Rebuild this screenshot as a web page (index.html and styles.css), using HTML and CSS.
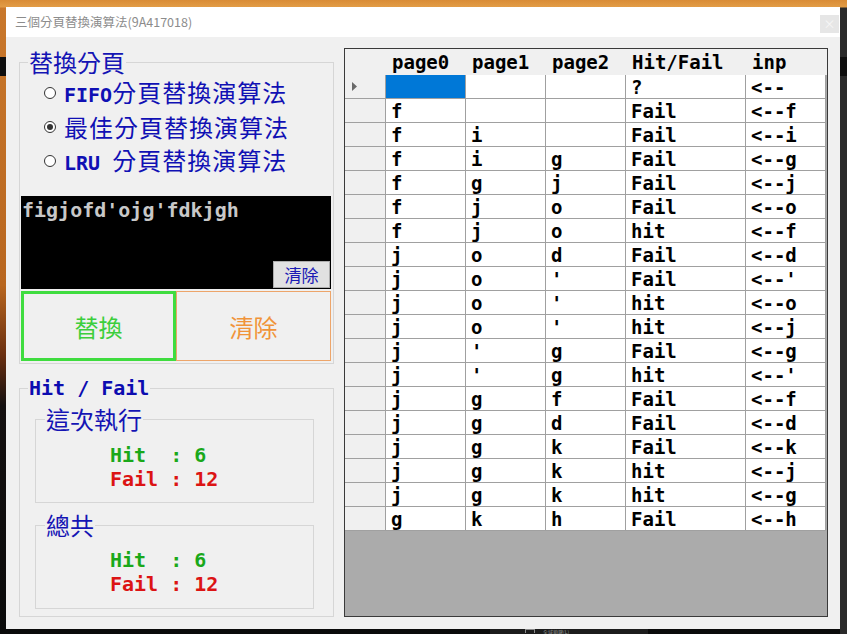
FILE: index.html
```html
<!DOCTYPE html>
<html>
<head>
<meta charset="utf-8">
<title>三個分頁替換演算法</title>
<link rel="stylesheet" href="styles.css">
</head>
<body>
<div class="desktop">
  <div class="window">
    <div class="titlebar">
      <span class="title">三個分頁替換演算法(9A417018)</span>
      <span class="close">×</span>
    </div>
    <div class="client">
      <div class="left">
        <fieldset class="group g-replace">
          <legend class="legend-cjk">替換分頁</legend>
          <div class="radios">
            <div class="radio"><span class="dot"></span><span class="rlabel"><b class="mono">FIFO</b>分頁替換演算法</span></div>
            <div class="radio"><span class="dot checked"></span><span class="rlabel">最佳分頁替換演算法</span></div>
            <div class="radio"><span class="dot"></span><span class="rlabel"><b class="mono">LRU </b>分頁替換演算法</span></div>
          </div>
          <div class="input">
            <div class="input-text">figjofd'ojg'fdkjgh</div>
            <button class="small-btn">清除</button>
          </div>
          <div class="big-btns">
            <button class="big-btn go">替換</button>
            <button class="big-btn clear">清除</button>
          </div>
        </fieldset>
        <fieldset class="group g-stats">
          <legend class="legend-mono">Hit / Fail</legend>
          <fieldset class="group sub sub1">
            <legend class="legend-cjk sub-legend">這次執行</legend>
            <div class="sub-body b1">
              <div class="stat hit">Hit  : 6</div>
              <div class="stat fail">Fail : 12</div>
            </div>
          </fieldset>
          <fieldset class="group sub sub2">
            <legend class="legend-cjk sub-legend">總共</legend>
            <div class="sub-body b2">
              <div class="stat hit">Hit  : 6</div>
              <div class="stat fail">Fail : 12</div>
            </div>
          </fieldset>
        </fieldset>
      </div>
      <div class="grid">
        <div class="hrow">
          <div class="hcell rhw"></div>
          <div class="hcell cw">page0</div>
          <div class="hcell cw">page1</div>
          <div class="hcell cw">page2</div>
          <div class="hcell ww">Hit/Fail</div>
          <div class="hcell cw">inp</div>
        </div>
        <div class="row"><div class="cell rh"><svg width="5" height="9" viewBox="0 0 5 9"><polygon points="0,0 5,4.5 0,9" fill="#6a6a6a"/></svg></div><div class="cell cw sel"></div><div class="cell cw"></div><div class="cell cw"></div><div class="cell ww">?</div><div class="cell cw">&lt;--</div></div>
        <div class="row"><div class="cell rh"></div><div class="cell cw">f</div><div class="cell cw"></div><div class="cell cw"></div><div class="cell ww">Fail</div><div class="cell cw">&lt;--f</div></div>
        <div class="row"><div class="cell rh"></div><div class="cell cw">f</div><div class="cell cw">i</div><div class="cell cw"></div><div class="cell ww">Fail</div><div class="cell cw">&lt;--i</div></div>
        <div class="row"><div class="cell rh"></div><div class="cell cw">f</div><div class="cell cw">i</div><div class="cell cw">g</div><div class="cell ww">Fail</div><div class="cell cw">&lt;--g</div></div>
        <div class="row"><div class="cell rh"></div><div class="cell cw">f</div><div class="cell cw">g</div><div class="cell cw">j</div><div class="cell ww">Fail</div><div class="cell cw">&lt;--j</div></div>
        <div class="row"><div class="cell rh"></div><div class="cell cw">f</div><div class="cell cw">j</div><div class="cell cw">o</div><div class="cell ww">Fail</div><div class="cell cw">&lt;--o</div></div>
        <div class="row"><div class="cell rh"></div><div class="cell cw">f</div><div class="cell cw">j</div><div class="cell cw">o</div><div class="cell ww">hit</div><div class="cell cw">&lt;--f</div></div>
        <div class="row"><div class="cell rh"></div><div class="cell cw">j</div><div class="cell cw">o</div><div class="cell cw">d</div><div class="cell ww">Fail</div><div class="cell cw">&lt;--d</div></div>
        <div class="row"><div class="cell rh"></div><div class="cell cw">j</div><div class="cell cw">o</div><div class="cell cw">'</div><div class="cell ww">Fail</div><div class="cell cw">&lt;--'</div></div>
        <div class="row"><div class="cell rh"></div><div class="cell cw">j</div><div class="cell cw">o</div><div class="cell cw">'</div><div class="cell ww">hit</div><div class="cell cw">&lt;--o</div></div>
        <div class="row"><div class="cell rh"></div><div class="cell cw">j</div><div class="cell cw">o</div><div class="cell cw">'</div><div class="cell ww">hit</div><div class="cell cw">&lt;--j</div></div>
        <div class="row"><div class="cell rh"></div><div class="cell cw">j</div><div class="cell cw">'</div><div class="cell cw">g</div><div class="cell ww">Fail</div><div class="cell cw">&lt;--g</div></div>
        <div class="row"><div class="cell rh"></div><div class="cell cw">j</div><div class="cell cw">'</div><div class="cell cw">g</div><div class="cell ww">hit</div><div class="cell cw">&lt;--'</div></div>
        <div class="row"><div class="cell rh"></div><div class="cell cw">j</div><div class="cell cw">g</div><div class="cell cw">f</div><div class="cell ww">Fail</div><div class="cell cw">&lt;--f</div></div>
        <div class="row"><div class="cell rh"></div><div class="cell cw">j</div><div class="cell cw">g</div><div class="cell cw">d</div><div class="cell ww">Fail</div><div class="cell cw">&lt;--d</div></div>
        <div class="row"><div class="cell rh"></div><div class="cell cw">j</div><div class="cell cw">g</div><div class="cell cw">k</div><div class="cell ww">Fail</div><div class="cell cw">&lt;--k</div></div>
        <div class="row"><div class="cell rh"></div><div class="cell cw">j</div><div class="cell cw">g</div><div class="cell cw">k</div><div class="cell ww">hit</div><div class="cell cw">&lt;--j</div></div>
        <div class="row"><div class="cell rh"></div><div class="cell cw">j</div><div class="cell cw">g</div><div class="cell cw">k</div><div class="cell ww">hit</div><div class="cell cw">&lt;--g</div></div>
        <div class="row"><div class="cell rh"></div><div class="cell cw">g</div><div class="cell cw">k</div><div class="cell cw">h</div><div class="cell ww">Fail</div><div class="cell cw">&lt;--h</div></div>
      </div>
    </div>
  </div>
  <div class="strip"><span class="strip-icon"></span><span class="strip-text">全域鎖鍵(L)</span></div>
</div>
</body>
</html>
```
FILE: styles.css
```css
* { box-sizing: border-box; }
html, body { margin: 0; padding: 0; }
body {
  width: 847px;
  height: 634px;
  overflow: hidden;
  background: #0c0c0c;
  font-family: "Noto Sans CJK TC", sans-serif;
}
.desktop {
  width: 847px;
  height: 634px;
  padding: 7px 7px 0 6px;
  background:
    linear-gradient(to bottom, #d98c36 0, #e29c46 7px, transparent 8px),
    linear-gradient(to bottom, transparent 57px, #0e0e0e 57px, #0e0e0e 76px, transparent 76px),
    linear-gradient(to right, transparent 840px, #2a2a2a 840px),
    linear-gradient(to bottom, #c9782c 0, #b8661f 45%, #6a2f10 56%, #141010 64%, #0a0a0a 100%);
}
.window {
  width: 834px;
  height: 622px;
  display: flex;
  flex-direction: column;
}
.titlebar {
  height: 30px;
  background: #ffffff;
  display: flex;
  justify-content: space-between;
  align-items: flex-start;
  padding: 0 1px 0 9px;
}
.title {
  font-size: 12.5px;
  line-height: 30px;
  color: #8c8c8c;
}
.close {
  margin-top: 8px;
  width: 19px;
  height: 18px;
  background: #e6e6e6;
  color: #f6f6f6;
  font-size: 12px;
  line-height: 18px;
  text-align: center;
}
.client {
  flex: 1;
  background: #f0f0f0;
  display: flex;
  align-items: flex-start;
  padding-left: 13px;
  gap: 10px;
}
.left {
  width: 315px;
  margin-top: 13px;
}
.group {
  margin: 0;
  padding: 0;
  min-width: 0;
  border: 1px solid #d6d6d6;
}
.legend-cjk {
  font-size: 24px;
  line-height: 24px;
  color: #1414b4;
  margin-left: 8px;
  padding: 0 1px;
}
.legend-mono {
  font-family: "DejaVu Sans Mono", monospace;
  font-weight: bold;
  font-size: 20px;
  line-height: 22px;
  color: #0c0cb0;
  margin-left: 8px;
  padding: 0 1px;
}
.g-replace { padding-bottom: 2px; }
.radios { padding-top: 2px; }
.radio {
  height: 34px;
  display: flex;
  align-items: center;
  padding-left: 24px;
}
.dot {
  width: 12px;
  height: 12px;
  border: 1px solid #333333;
  border-radius: 50%;
  background: #ffffff;
  margin-right: 8px;
  display: flex;
  align-items: center;
  justify-content: center;
  flex: none;
}
.dot.checked::after {
  content: "";
  width: 6px;
  height: 6px;
  border-radius: 50%;
  background: #333333;
}
.rlabel {
  font-size: 24px;
  line-height: 34px;
  color: #1010b4;
  letter-spacing: 1px;
  white-space: pre;
}
.mono {
  font-family: "DejaVu Sans Mono", monospace;
  font-weight: bold;
  font-size: 20px;
  letter-spacing: 0;
}
.input {
  margin: 18px 0 0 1px;
  width: 310px;
  height: 93px;
  background: #000000;
  display: flex;
  flex-direction: column;
  justify-content: space-between;
  padding: 3px 1px 1px 1px;
}
.input-text {
  color: #c8c8c8;
  font-family: "DejaVu Sans Mono", monospace;
  font-weight: bold;
  font-size: 20px;
  line-height: 22px;
}
.small-btn {
  align-self: flex-end;
  width: 57px;
  height: 27px;
  padding: 0;
  background: #e1e1e1;
  border: 1px solid #adadad;
  color: #1a1ab4;
  font-family: "Noto Sans CJK TC", sans-serif;
  font-size: 17px;
  line-height: 25px;
}
.big-btns {
  display: flex;
  margin: 2px 0 0 1px;
}
.big-btn {
  width: 155px;
  height: 70px;
  padding: 0;
  background: #f0f0f0;
  font-family: "Noto Sans CJK TC", sans-serif;
  font-size: 24px;
}
.go {
  border: 3px solid #3fdc3f;
  color: #3cce3c;
}
.clear {
  border: 1px solid #eda56a;
  color: #f0943a;
}
.g-stats {
  margin-top: 13px;
  padding-bottom: 7px;
}
.sub {
  margin: 8px 19px 0 15px;
}
.sub2 { margin-top: 10px; }
.sub-legend { margin-left: 9px; }
.sub-body { padding-left: 74px; }
.b1 { padding-top: 12px; padding-bottom: 11px; }
.b2 { padding-top: 11px; padding-bottom: 12px; }
.stat {
  font-family: "DejaVu Sans Mono", monospace;
  font-weight: bold;
  font-size: 20px;
  line-height: 24px;
  white-space: pre;
}
.hit { color: #1aa81a; }
.fail { color: #dc1414; }

.grid {
  width: 484px;
  height: 569px;
  margin-top: 11px;
  border: 1px solid #3a3a3a;
  background: #ababab;
  display: flex;
  flex-direction: column;
}
.hrow {
  flex: none;
  display: flex;
  height: 26px;
  background: #f0f0f0;
}
.hcell {
  font-family: "DejaVu Sans Mono", monospace;
  font-weight: bold;
  font-size: 19px;
  line-height: 27px;
  padding-left: 6px;
  color: #000000;
}
.row {
  flex: none;
  display: flex;
  height: 24px;
}
.cell {
  height: 24px;
  background: #ffffff;
  border-right: 1px solid #a0a0a0;
  border-bottom: 1px solid #a0a0a0;
  font-family: "DejaVu Sans Mono", monospace;
  font-weight: bold;
  font-size: 19px;
  line-height: 24px;
  padding-left: 5px;
  white-space: pre;
  color: #000000;
}
.rhw { width: 41px; }
.rh {
  width: 41px;
  background: #f0f0f0;
  padding-left: 7px;
  display: flex;
  align-items: center;
}
.cw { width: 80px; }
.ww { width: 120px; }
.sel { background: #0078d7; }

.strip {
  height: 5px;
  overflow: hidden;
  margin-left: 484px;
  width: 158px;
  background: #1c1c1c;
  padding-left: 35px;
  display: flex;
  align-items: flex-start;
  gap: 8px;
}
.strip-icon {
  width: 10px;
  height: 4px;
  border: 1px solid #8a8a8a;
  border-bottom: none;
}
.strip-text {
  font-size: 5px;
  line-height: 5px;
  color: #9a9a9a;
}
```
